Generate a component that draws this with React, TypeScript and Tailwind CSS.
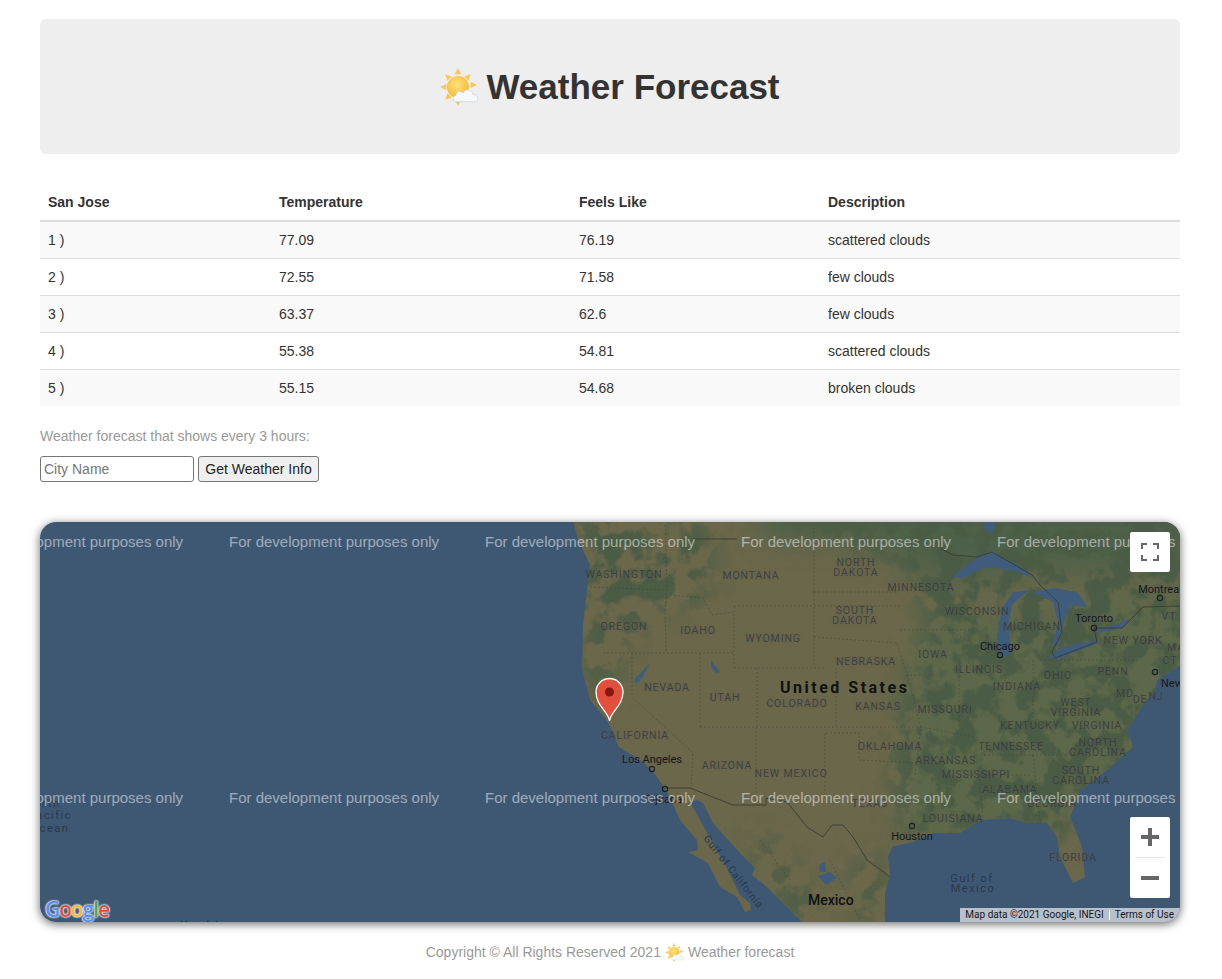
const rows = [
  ["1 )", "77.09", "76.19", "scattered clouds"],
  ["2 )", "72.55", "71.58", "few clouds"],
  ["3 )", "63.37", "62.6", "few clouds"],
  ["4 )", "55.38", "54.81", "scattered clouds"],
  ["5 )", "55.15", "54.68", "broken clouds"],
];

// [text, center x, center y] in page pixels, map origin is 40,522
const stateLabels: [string, number, number][] = [
  ["WASHINGTON", 624, 574], ["MONTANA", 751, 575], ["NORTH", 856, 562], ["DAKOTA", 856, 572],
  ["MINNESOTA", 921, 587], ["WISCONSIN", 977, 611], ["OREGON", 624, 626], ["IDAHO", 698, 630],
  ["SOUTH", 855, 610], ["DAKOTA", 855, 620], ["WYOMING", 773, 638], ["MICHIGAN", 1032, 626],
  ["NEW YORK", 1133, 640], ["IOWA", 933, 654], ["NEBRASKA", 866, 661], ["ILLINOIS", 979, 669],
  ["OHIO", 1058, 675], ["PENN", 1113, 671], ["NEVADA", 667, 687], ["UTAH", 725, 697],
  ["COLORADO", 797, 703], ["KANSAS", 878, 706], ["INDIANA", 1017, 686], ["MISSOURI", 945, 709],
  ["WEST", 1076, 702], ["VIRGINIA", 1076, 712], ["KENTUCKY", 1030, 725], ["VIRGINIA", 1097, 725],
  ["MD", 1125, 693], ["DE", 1140, 699], ["NJ", 1156, 696], ["VT", 1169, 616], ["MA", 1176, 647],
  ["CT", 1170, 660], ["CALIFORNIA", 635, 735], ["OKLAHOMA", 890, 746], ["TENNESSEE", 1011, 746],
  ["NORTH", 1098, 742], ["CAROLINA", 1098, 752], ["ARIZONA", 727, 765], ["ARKANSAS", 946, 760],
  ["MISSISSIPPI", 976, 774], ["NEW MEXICO", 791, 773], ["SOUTH", 1081, 770], ["CAROLINA", 1081, 780],
  ["ALABAMA", 1010, 789], ["TEXAS", 870, 803], ["GEORGIA", 1052, 803], ["LOUISIANA", 953, 818],
  ["FLORIDA", 1073, 857],
];

const cityLabels: [string, number, number][] = [
  ["Montreal", 1160, 589], ["Toronto", 1094, 618], ["Chicago", 1000, 646], ["New", 1172, 683],
  ["Los Angeles", 652, 759], ["Tijuana", 664, 799], ["Houston", 912, 836],
];

const cityDots = [
  [1160, 598], [1094, 628], [1000, 655], [1155, 672], [652, 769], [665, 789], [912, 826],
];

const waterLabels: [string, number, number][] = [
  ["North", 43, 803], ["Pacific", 50, 815], ["Ocean", 50, 828], ["Gulf of", 972, 878], ["Mexico", 973, 888],
];

const watermarks = [
  [-27, 541], [229, 541], [485, 541], [741, 541], [997, 541],
  [-27, 797], [229, 797], [485, 797], [741, 797], [997, 797],
];

// page coordinates, the svg group below shifts them by the map origin
const landPath =
  "M572 515 L578 540 L583 550 L590 565 L587 590 L583 625 L582 668 L590 700 L596 707 L608 722 L619 747 L640 760 L652 770 L664 787 L670 797 L680 820 L697 840 L698 850 L688 852 L708 863 L720 887 L737 897 L745 912 L751 910 L750 903 L740 895 L728 870 L715 847 L700 820 L690 802 L697 800 L703 803 L713 823 L740 853 L755 868 L752 875 L767 887 L783 903 L800 920 L807 930 L885 930 L885 893 L890 875 L888 857 L893 845 L890 847 L913 842 L933 833 L960 833 L980 820 L1010 818 L1027 823 L1047 823 L1057 837 L1060 857 L1073 883 L1085 877 L1082 847 L1070 817 L1080 790 L1107 770 L1133 747 L1127 730 L1140 710 L1147 700 L1155 690 L1157 680 L1185 662 L1185 515 Z";

const WeatherIcon = ({ size }: { size: number }) => (
  <svg width={size} height={size} viewBox="0 0 36 36" className="inline-block shrink-0">
    <defs>
      <radialGradient id="sun" cx="45%" cy="40%" r="65%">
        <stop offset="0%" stopColor="#ffe27a" />
        <stop offset="100%" stopColor="#f9b733" />
      </radialGradient>
    </defs>
    <g fill="#f8c75a">
      <path d="M17 0 L20 6 L14 6 Z" />
      <path d="M17 36 L14 30 L20 30 Z" />
      <path d="M0 18 L6 15 L6 21 Z" />
      <path d="M5 6 L11 8 L7 12 Z" />
      <path d="M5 30 L7 24 L11 28 Z" />
      <path d="M29 6 L27 12 L23 8 Z" />
      <path d="M35 16 L29 19 L29 13 Z" />
    </g>
    <circle cx="17" cy="18" r="10.500" fill="url(#sun)" />
    <path
      d="M16 32 C12 32 11 27 15 26 C15 22 20 21 22 24 C23 19 31 20 31 25 C34 25 37 28 35.500 30.500 C35 32 33.500 32 32.500 32 Z"
      fill="#f6f9fc"
      stroke="#bfd0de"
      strokeWidth="0.6"
    />
  </svg>
);

const GoogleLogo = () => (
  <div className="absolute bottom-[1px] left-[5px] font-['Open_Sans',sans-serif] text-[21px] leading-[24px] font-semibold tracking-[-1.100px] [text-shadow:0_0_2px_#e2e6ec,0_0_2px_#e2e6ec,0_0_2px_#e2e6ec,0_0_1px_#e2e6ec]">
    <span className="text-[#5b8ff0]">G</span>
    <span className="text-[#df4f3e]">o</span>
    <span className="text-[#f0bf2e]">o</span>
    <span className="text-[#5b8ff0]">g</span>
    <span className="text-[#4aa65a]">l</span>
    <span className="text-[#df4f3e]">e</span>
  </div>
);

const MapArt = () => (
  <svg viewBox="0 0 1140 400" className="absolute inset-0 h-full w-full">
    <defs>
      <filter id="soft" x="-20%" y="-20%" width="140%" height="140%">
        <feGaussianBlur stdDeviation="14" />
      </filter>
      <filter id="blotches" x="0" y="0" width="100%" height="100%" colorInterpolationFilters="sRGB">
        <feTurbulence type="fractalNoise" baseFrequency="0.045" numOctaves="4" seed="11" />
        <feColorMatrix values="0 0 0 0 0.29  0 0 0 0 0.36  0 0 0 0 0.27  0 0 0 7 -3.1" />
      </filter>
      <clipPath id="land">
        <path d={landPath} />
      </clipPath>
      <mask id="greenery" maskUnits="userSpaceOnUse" x="500" y="500" width="720" height="450">
        <g filter="url(#soft)" fill="#fff">
          <path d="M572 515 L710 515 L712 600 L660 610 L625 640 L610 700 L590 700 Z" />
          <path d="M760 515 L1190 515 L1190 680 L1130 770 L1060 840 L900 840 L890 740 L930 620 L900 560 Z" />
          <path d="M745 840 L770 835 L830 925 L790 925 Z" />
          <path d="M850 860 L885 860 L885 925 L860 925 Z" />
        </g>
      </mask>
    </defs>
    <rect width="1140" height="400" fill="#3e5874" />

    <g transform="translate(-40,-522)">
      <g clipPath="url(#land)">
        <rect x="500" y="500" width="720" height="450" fill="#6a674a" />
        <g filter="url(#soft)">
          <path d="M760 500 L1200 500 L1200 570 L1040 575 L940 585 L860 540 L760 540 Z" fill="#4e6149" />
          <path d="M920 620 L1200 590 L1200 680 L1120 780 L1060 830 L900 840 Z" fill="#5c6849" />
        </g>
        <g mask="url(#greenery)">
          <rect x="500" y="500" width="720" height="450" filter="url(#blotches)" />
        </g>
      </g>

      {/* great lakes and inland water */}
      <g fill="#3f5c7c">
        <path d="M952 577 L977 558 L992 552 L1017 565 L1033 577 L1017 572 L997 568 L983 568 L963 578 Z" />
        <path d="M997 638 L1002 608 L1013 592 L1030 590 L1023 595 L1012 605 L1008 625 L1012 652 L1003 658 L998 648 Z" />
        <path d="M1033 592 L1053 588 L1077 592 L1088 607 L1070 605 L1063 625 L1058 645 L1052 650 L1058 622 L1053 602 Z" />
        <path d="M1048 657 L1063 647 L1097 640 L1098 643 L1073 653 L1057 660 Z" />
        <path d="M1095 630 L1120 623 L1130 618 L1123 628 L1097 633 Z" />
        <path d="M983 520 L996 520 L993 533 L986 531 Z" />
        <path d="M711 660 L716 667 L720 672 L716 673 L711 667 Z" />
        <path d="M634 680 L650 663 L642 678 L636 684 Z" />
        <path d="M819 865 L825 862 L826 872 L820 872 Z" />
        <path d="M818 876 L830 872 L837 878 L826 885 Z" />
      </g>

      {/* borders */}
      <g fill="none" stroke="#3c4036" strokeWidth="1">
        <path d="M693 539 L737 539" />
        <path d="M940 548 L953 555 L977 557 L992 552 L1032 575 L1040 585 L1058 602 L1062 632 L1052 652 L1055 658 L1097 642 L1094 628 L1122 628 L1143 607 L1180 606" />
        <path d="M665 788 L690 788 L733 805 L766 805 L766 798 L787 802 L807 827 L823 837 L832 825 L843 825 L853 837 L867 860 L890 877" />
      </g>
      <g fill="none" stroke="#3c4036" strokeWidth="0.8" strokeDasharray="2 2" opacity="0.55">
        <path d="M590 587 L665 590 M665 525 L667 590 L665 610 L666 653 M670 595 L703 598 L712 615 L733 612 M734 606 L734 668 M734 606 L812 606 M734 668 L826 668 M603 653 L734 653 M632 653 L632 697 L693 753 L691 787 M700 653 L700 727 M757 668 L757 727 M836 668 L836 727 M700 727 L921 727 M756 727 L756 803 M825 733 L825 800 M826 733 L859 733 L859 760 L921 763 M814 527 L814 668 M814 592 L897 592 M814 606 L900 606 M814 637 L897 643 L907 675 L921 675 M907 675 L921 727 L915 775 M900 630 L979 630 M959 660 L959 727 M1033 660 L1033 720 M921 727 L980 738 M980 755 L1067 755 M960 775 L1030 775 M979 775 L983 820 M1033 755 L1040 820 M1040 660 L1140 660 M1075 745 L1125 750 M950 630 L1000 660 M1040 750 L1090 790 M760 840 L790 880 M830 860 L860 920" />
      </g>

      {cityDots.map(([x, y]) => (
        <circle key={x} cx={x} cy={y} r="2.600" fill="none" stroke="#1d2026" strokeWidth="1.200" />
      ))}

      {/* pin */}
      <path
        d="M609.500 721 C609 712 596 706 596 692 A13.500 13.500 0 0 1 623 692 C623 706 610 712 609.500 721 Z"
        fill="#e0503d"
        stroke="#fff"
        strokeWidth="1.300"
      />
      <circle cx="609.500" cy="692" r="4.500" fill="#86190f" />
    </g>
  </svg>
);

const MapBox = () => (
  <div className="relative h-[400px] overflow-hidden rounded-[16px] shadow-[0_2px_10px_rgba(0,0,0,0.6)]">
    <MapArt />

    {stateLabels.map(([text, x, y]) => (
      <span
        key={text + x}
        className="absolute -translate-x-1/2 -translate-y-1/2 font-['Roboto',sans-serif] text-[10.500px] leading-none tracking-[0.9px] whitespace-nowrap text-[#34373a]/80 [text-shadow:0_0_2px_rgba(95,95,95,0.55)]"
        style={{ left: x - 40, top: y - 521 }}
      >
        {text}
      </span>
    ))}
    {cityLabels.map(([text, x, y]) => (
      <span
        key={text}
        className="absolute -translate-x-1/2 -translate-y-1/2 font-['Roboto',sans-serif] text-[11px] leading-none whitespace-nowrap text-[#15171a] [text-shadow:0_0_2px_rgba(95,95,95,0.55)]"
        style={{ left: x - 40, top: y - 522 }}
      >
        {text}
      </span>
    ))}
    {waterLabels.map(([text, x, y]) => (
      <span
        key={text}
        className="absolute -translate-x-1/2 -translate-y-1/2 font-['Roboto',sans-serif] text-[11px] leading-none tracking-[1.500px] whitespace-nowrap text-[#28394c]"
        style={{ left: x - 40, top: y - 522 }}
      >
        {text}
      </span>
    ))}

    <span className="absolute top-[158px] left-[740px] font-['Roboto',sans-serif] text-[16px] leading-none font-bold tracking-[2.500px] whitespace-nowrap text-[#101214]">
      United States
    </span>
    <span className="absolute top-[371px] left-[768px] font-['Roboto',sans-serif] text-[14px] leading-none font-medium whitespace-nowrap text-[#0f1114]">
      Mexico
    </span>
    <span className="absolute top-[345px] left-[648px] rotate-[52deg] font-['Roboto',sans-serif] text-[10.500px] leading-none tracking-[0.6px] whitespace-nowrap text-[#28394c]">
      Gulf of California
    </span>
    <span className="absolute top-[398px] left-[140px] font-['Roboto',sans-serif] text-[11px] leading-none text-[#15171a]">
      Honolulu
    </span>

    {watermarks.map(([x, y]) => (
      <span
        key={`${x}-${y}`}
        className="absolute -translate-y-1/2 text-[15px] leading-none whitespace-nowrap text-white/50"
        style={{ left: x - 40, top: y - 522 }}
      >
        For development purposes only
      </span>
    ))}

    <GoogleLogo />

    <div className="absolute right-0 bottom-0 flex h-[14px] items-center bg-[#c5ccd6]/90 font-['Roboto',sans-serif] text-[10px] leading-none text-[#15171a]">
      <span className="border-r border-white pr-[5px] pl-[5px]">Map data ©2021 Google, INEGI</span>
      <span className="pr-[6px] pl-[5px]">Terms of Use</span>
    </div>

    {/* fullscreen */}
    <div className="absolute top-[10px] right-[10px] flex h-10 w-10 items-center justify-center rounded-[2px] bg-white">
      <svg width="18" height="18" viewBox="0 0 18 18" fill="#666">
        <path d="M0 0h6v2H2v4H0zM12 0h6v6h-2V2h-4zM0 12h2v4h4v2H0zM16 12h2v6h-6v-2h4z" />
      </svg>
    </div>

    {/* zoom */}
    <div className="absolute right-[10px] bottom-6 flex h-[81px] w-10 flex-col items-center rounded-[2px] bg-white">
      <div className="flex h-10 items-center justify-center">
        <svg width="18" height="18" viewBox="0 0 18 18" fill="#666">
          <path d="M7 0h4v7h7v4h-7v7H7v-7H0V7h7z" />
        </svg>
      </div>
      <div className="h-px w-[30px] bg-[#e6e6e6]" />
      <div className="flex h-10 items-center justify-center">
        <svg width="18" height="18" viewBox="0 0 18 18" fill="#666">
          <path d="M0 7h18v4H0z" />
        </svg>
      </div>
    </div>
  </div>
);

export default function App() {
  return (
    <div className="min-h-[979px] bg-white pt-[19px] pr-[42px] pl-10 font-['Liberation_Sans',Arial,sans-serif] text-sm text-[#333]">
      {/* header */}
      <div className="flex h-[135px] items-center justify-center gap-[8px] rounded-md bg-[#eeeeee]">
        <WeatherIcon size={38} />
        <h1 className="text-[35px] font-bold text-[#333]">Weather Forecast</h1>
      </div>

      {/* forecast table */}
      <table className="mt-[30px] w-full table-fixed border-collapse text-left">
        <thead>
          <tr className="h-[37px] border-b-2 border-[#ddd]">
            <th className="w-[231px] px-2 font-bold">San Jose</th>
            <th className="w-[300px] px-2 font-bold">Temperature</th>
            <th className="w-[249px] px-2 font-bold">Feels Like</th>
            <th className="px-2 font-bold">Description</th>
          </tr>
        </thead>
        <tbody>
          {rows.map((row, i) => (
            <tr key={row[0]} className={`h-[37px] border-t border-[#ddd] ${i % 2 === 0 ? "bg-[#f9f9f9]" : ""}`}>
              {row.map((cell) => (
                <td key={cell} className="px-2">
                  {cell}
                </td>
              ))}
            </tr>
          ))}
        </tbody>
      </table>

      {/* search */}
      <p className="mt-5 text-[14px] leading-5 text-[#999]">Weather forecast that shows every 3 hours:</p>
      <div className="mt-[10px] flex gap-1">
        <input
          placeholder="City Name"
          className="h-[26px] w-[154px] rounded-[3px] border border-[#767676] px-[3px] text-[14px] placeholder:text-[#757575]"
        />
        <button className="h-[26px] w-[121px] rounded-[3px] border border-[#767676] bg-[#efefef] text-[14px] text-[#222]">
          Get Weather Info
        </button>
      </div>

      <div className="mt-10">
        <MapBox />
      </div>

      {/* footer */}
      <div className="mt-[20px] flex items-center justify-center gap-1 text-[14px] leading-5 text-[#999]">
        <span>Copyright © All Rights Reserved 2021</span>
        <WeatherIcon size={19} />
        <span>Weather forecast</span>
      </div>
    </div>
  );
}
